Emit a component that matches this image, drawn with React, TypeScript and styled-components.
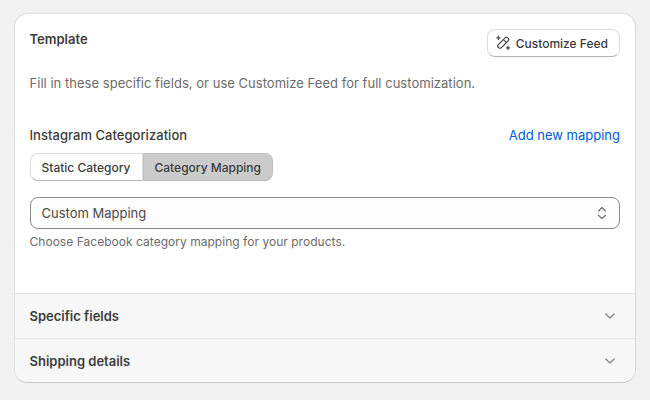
import React from 'react'
import styled, { createGlobalStyle } from 'styled-components'

const GlobalStyle = createGlobalStyle`
  html, body {
    margin: 0;
    padding: 0;
    background: #f1f1f1;
  }
  body {
    font-family: Inter, "Liberation Sans", sans-serif;
    -webkit-font-smoothing: antialiased;
  }
`

const MagicIcon = () => (
  <svg width="16" height="16" viewBox="0 0 16 16" fill="none" stroke="#4a4a4a" strokeWidth="1.3" strokeLinecap="round" strokeLinejoin="round">
    <path d="M10.3 2.6 a1.5 1.5 0 0 1 2.1 0 l.9 .9 a1.5 1.5 0 0 1 0 2.1 L6.1 12.9 a1.5 1.5 0 0 1 -2.1 0 l-.9 -.9 a1.5 1.5 0 0 1 0 -2.1 Z" />
    <path d="M8.4 4.6 l3 3" />
    <path d="M3.4 1.2 v3.2 M1.8 2.8 h3.2" />
    <path d="M13 11.4 v3 M11.5 12.9 h3" />
  </svg>
)

const Chevron = () => (
  <svg width="14" height="14" viewBox="0 0 14 14" fill="none" stroke="#8a8a8a" strokeWidth="1.5" strokeLinecap="round" strokeLinejoin="round">
    <path d="M2.8 5 L7 9 L11.2 5" />
  </svg>
)

const UpDown = () => (
  <svg width="12" height="16" viewBox="0 0 12 16" fill="none" stroke="#7a7a7a" strokeWidth="1.4" strokeLinecap="round" strokeLinejoin="round">
    <path d="M2.6 6 L6 2.6 L9.4 6" />
    <path d="M2.6 10.4 L6 13.6 L9.4 10.4" />
  </svg>
)

export default function App() {
  return (
    <Page>
      <GlobalStyle />
      <Card>
        <Body>
          <TitleRow>
            <Title>Template</Title>
            <CustomizeButton>
              <MagicIcon />
              Customize Feed
            </CustomizeButton>
          </TitleRow>
          <Intro>Fill in these specific fields, or use Customize Feed for full customization.</Intro>
          <LabelRow>
            <Label>Instagram Categorization</Label>
            <LinkText>Add new mapping</LinkText>
          </LabelRow>
          <Segments>
            <Segment>Static Category</Segment>
            <Segment $active>Category Mapping</Segment>
          </Segments>
          <Select>
            Custom Mapping
            <UpDown />
          </Select>
          <Help>Choose Facebook category mapping for your products.</Help>
        </Body>
        <Section>
          Specific fields
          <Chevron />
        </Section>
        <Section $last>
          Shipping details
          <Chevron />
        </Section>
      </Card>
    </Page>
  )
}

const Page = styled.div`
  box-sizing: border-box;
  width: 650px;
  height: 400px;
  padding: 13px 14.5px 17px 14px;
`

const Card = styled.div`
  box-sizing: border-box;
  height: 370px;
  background: #fff;
  border: 1px solid #e0e0e0;
  border-bottom-color: #c8c8c8;
  border-right-color: #d8d8d8;
  border-radius: 14px;
  overflow: hidden;
  display: flex;
  flex-direction: column;
`

const Body = styled.div`
  flex: 1;
  padding: 15px 14.5px 0 14.5px;
`

const TitleRow = styled.div`
  display: flex;
  justify-content: space-between;
  align-items: flex-start;
`

const Title = styled.h2`
  margin: 2px 0 0;
  font-size: 13px;
  line-height: 16px;
  font-weight: 600;
  color: #3c3c3c;
`

const CustomizeButton = styled.button`
  box-sizing: border-box;
  display: flex;
  align-items: center;
  gap: 5px;
  height: 28px;
  padding: 0 11px 0 7px;
  margin: 0;
  font-family: inherit;
  font-size: 12px;
  font-weight: 500;
  color: #3c3c3c;
  background: #fff;
  border: 1px solid #dcdcdc;
  border-bottom-color: #b5b5b5;
  border-radius: 8px;
`

const Intro = styled.p`
  margin: 17px 0 0;
  font-size: 13px;
  line-height: 18px;
  letter-spacing: 0.03px;
  color: #6b6b6b;
`

const LabelRow = styled.div`
  display: flex;
  justify-content: space-between;
  align-items: center;
  margin-top: 34px;
  height: 18px;
`

const Label = styled.span`
  font-size: 13px;
  font-weight: 500;
  letter-spacing: 0.03px;
  color: #3c3c3c;
`

const LinkText = styled.a`
  font-size: 13px;
  font-weight: 400;
  color: #005bd3;
`

const Segments = styled.div`
  display: flex;
  width: fit-content;
  margin-top: 9px;
`

const Segment = styled.div<{ $active?: boolean }>`
  box-sizing: border-box;
  height: 28px;
  display: flex;
  align-items: center;
  padding: 0 11px;
  font-size: 12px;
  font-weight: 500;
  color: #3c3c3c;
  background: ${p => (p.$active ? '#cbcbcb' : '#fff')};
  border: 1px solid ${p => (p.$active ? '#c0c0c0' : '#dcdcdc')};
  border-bottom-color: #b5b5b5;
  border-radius: ${p => (p.$active ? '0 8px 8px 0' : '8px 0 0 8px')};
`

const Select = styled.div`
  box-sizing: border-box;
  height: 32px;
  margin-top: 16px;
  padding: 0 11px;
  display: flex;
  justify-content: space-between;
  align-items: center;
  font-size: 13px;
  color: #4a4a4a;
  background: #fdfdfd;
  border: 1px solid #8a8a8a;
  border-radius: 8px;
`

const Help = styled.p`
  margin: 5px 0 0;
  font-size: 12px;
  line-height: 16px;
  letter-spacing: 0.03px;
  color: #6b6b6b;
`

const Section = styled.div<{ $last?: boolean }>`
  box-sizing: border-box;
  flex: none;
  height: ${p => (p.$last ? '44px' : '45px')};
  padding: 0 18px 0 14.5px;
  display: flex;
  justify-content: space-between;
  align-items: center;
  font-size: 13px;
  font-weight: 600;
  color: #3c3c3c;
  background: #f7f7f7;
  border-top: 1px solid #e3e3e3;
`
